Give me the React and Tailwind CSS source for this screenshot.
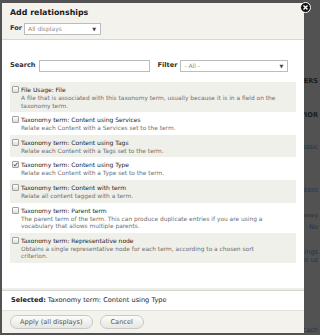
const ITEMS = [
  {
    title: 'File Usage: File',
    desc: 'A file that is associated with this taxonomy term, usually because it is in a field on the taxonomy term.',
  },
  { title: 'Taxonomy term: Content using Services', desc: 'Relate each Content with a Services set to the term.' },
  { title: 'Taxonomy term: Content using Tags', desc: 'Relate each Content with a Tags set to the term.' },
  { title: 'Taxonomy term: Content using Type', desc: 'Relate each Content with a Type set to the term.', checked: true },
  { title: 'Taxonomy term: Content with term', desc: 'Relate all content tagged with a term.' },
  {
    title: 'Taxonomy term: Parent term',
    desc: 'The parent term of the term. This can produce duplicate entries if you are using a vocabulary that allows multiple parents.',
  },
  {
    title: 'Taxonomy term: Representative node',
    // the original wraps before the last word
    desc: 'Obtains a single representative node for each term, according to a chosen sort\ncriterion.',
  },
]

// page text peeking out right of the dialog
const BEHIND = [
  { text: 'FORMATTERS', cls: 'mt-[77px] text-[#1c1c1c] font-bold' },
  { text: 'OTHER BEHAVIOR', cls: 'mt-[26px] text-[#1c1c1c] font-bold' },
  { text: 'Display: Basic', cls: 'mt-[24px] text-[#1d3550]' },
  { text: 'Content', cls: 'mt-[35px] text-[#1d3550]' },
  { text: 'Summary', cls: 'mt-[17px] text-[#2a2a2a] text-[5px]' },
  { text: 'No', cls: 'mt-[4px] text-[#1d3550]' },
  { text: 'Settings', cls: 'mt-[17px] text-[#1d3550]' },
  { text: 'Content us', cls: 'mt-[0px] text-[#1d3550]' },
  { text: 'Query settings: Caching cach', cls: 'mt-[62px] text-[#1d3550]' },
]

function Checkbox({ checked }) {
  return (
    <span className="mt-[1px] w-[7px] h-[7px] shrink-0 rounded-[1px] border border-[#a0a0a0] bg-gradient-to-b from-white to-[#dcdcdc] flex items-center justify-center">
      {checked && (
        <svg width="7" height="7" viewBox="0 0 7 7" className="-mt-[1px]">
          <path d="M1 3.6 L2.8 5.4 L6.2 1" fill="none" stroke="#333" strokeWidth="1.3" />
        </svg>
      )}
    </span>
  )
}

function Select({ value, className }) {
  return (
    <div className={`h-[12px] border border-[#bcbcbc] bg-white flex items-center justify-between pl-[3px] pr-[4px] ${className}`}>
      <span className="text-[6px] text-[#8a8a8a] leading-none">{value}</span>
      <span className="text-[5px] text-[#444] leading-none">▼</span>
    </div>
  )
}

export default function App() {
  return (
    <div className="w-[320px] h-[335px] bg-[#525252] flex overflow-hidden font-['DejaVu_Sans',sans-serif]">
      {/* dialog */}
      <div className="relative ml-[2px] mt-[3px] w-[302px] h-[330px] shrink-0 bg-white flex flex-col">
        <div className="h-[37px] bg-[#f3f2ed] border-b border-[#d8d8d2] px-[8px] pt-[5px]">
          <div className="text-[7.9px] font-bold text-[#1c1c1c] leading-[10px]">Add relationships</div>
          <div className="mt-[5px] flex items-center gap-[2px]">
            <span className="text-[6.6px] font-bold text-[#333]">For</span>
            <Select value="All displays" className="w-[77px]" />
          </div>
        </div>

        <div className="flex-1 px-[8px] pt-[20px]">
          <div className="flex items-center">
            <span className="text-[6.6px] font-bold text-[#333]">Search</span>
            <div className="ml-[3px] w-[111px] h-[12px] border border-[#bcbcbc] bg-white" />
            <span className="ml-[8px] text-[6.6px] font-bold text-[#333]">Filter</span>
            <Select value="- All -" className="ml-[3px] w-[108px]" />
          </div>

          <div className="mt-[10px] w-[286px]">
            {ITEMS.map((it, i) => (
              <div
                key={it.title}
                className={`flex gap-[2px] pl-[2px] pr-[3px] pt-[3px] pb-[2px] ${i % 2 === 0 ? 'bg-[#f0f0ea]' : 'bg-white'}`}
              >
                <Checkbox checked={it.checked} />
                <div className="min-w-0 w-[266px]">
                  <div className="text-[6px] leading-[9px] text-[#222]">{it.title}</div>
                  <div className="mt-[1px] text-[5.9px] leading-[7.6px] text-[#6f6f6f] whitespace-pre-line">{it.desc}</div>
                </div>
              </div>
            ))}
          </div>
        </div>

        <div className="h-[3px] bg-[#eeeeea] border-b border-[#d4d4d0]" />
        <div className="h-[19px] px-[9px] flex items-center gap-[2px] text-[6.6px] text-[#222]">
          <span className="font-bold">Selected:</span>
          <span>Taxonomy term: Content using Type</span>
        </div>
        <div className="h-[23px] bg-[#f3f2ed] border-t border-[#e2e2dc] px-[8px] flex items-center gap-[7px]">
          <button className="h-[14px] px-[9px] rounded-full border border-[#c8c8c4] bg-gradient-to-b from-[#fcfcfb] to-[#e6e6e2] text-[6.6px] text-[#555] leading-none">
            Apply (all displays)
          </button>
          <button className="h-[14px] px-[10px] rounded-full border border-[#c8c8c4] bg-gradient-to-b from-[#fcfcfb] to-[#e6e6e2] text-[6.6px] text-[#555] leading-none">
            Cancel
          </button>
        </div>

        {/* close button */}
        <div className="absolute -right-[7px] -top-[1px] w-[11px] h-[11px] rounded-full bg-[#111] border border-white flex items-center justify-center">
          <svg width="7" height="7" viewBox="0 0 7 7">
            <path d="M1.5 1.5 L5.5 5.5 M5.5 1.5 L1.5 5.5" stroke="white" strokeWidth="1.4" />
          </svg>
        </div>
      </div>

      {/* page behind the overlay */}
      <div className="flex-1 min-w-0 overflow-hidden flex flex-col items-end pr-[2px] text-[6.6px] leading-[8px]">
        {BEHIND.map((b) => (
          <div key={b.text} className={`whitespace-nowrap ${b.cls}`}>
            {b.text}
          </div>
        ))}
      </div>
    </div>
  )
}
